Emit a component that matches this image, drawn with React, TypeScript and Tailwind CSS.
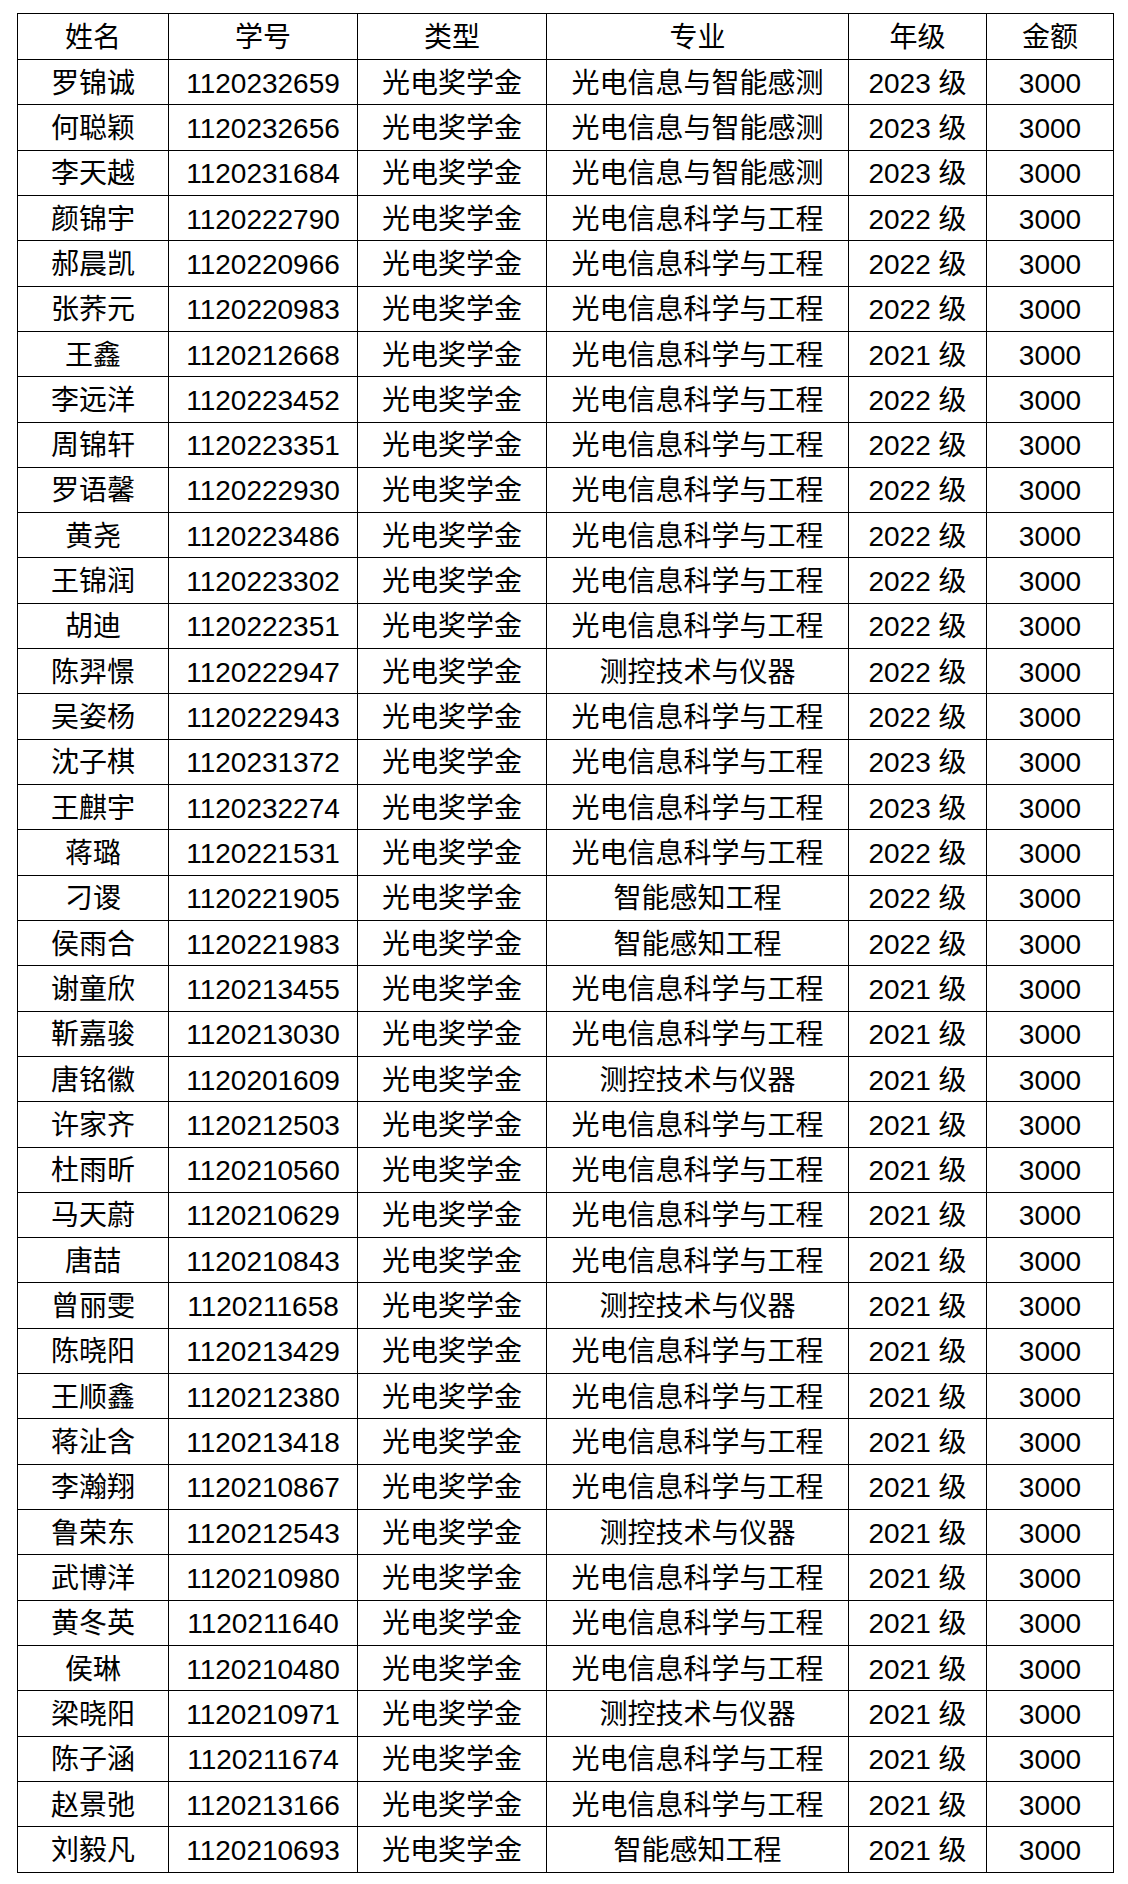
const ROWS: [string, string, string, string, string][] = [
  ['罗锦诚', '1120232659', '光电奖学金', '光电信息与智能感测', '2023'],
  ['何聪颖', '1120232656', '光电奖学金', '光电信息与智能感测', '2023'],
  ['李天越', '1120231684', '光电奖学金', '光电信息与智能感测', '2023'],
  ['颜锦宇', '1120222790', '光电奖学金', '光电信息科学与工程', '2022'],
  ['郝晨凯', '1120220966', '光电奖学金', '光电信息科学与工程', '2022'],
  ['张荞元', '1120220983', '光电奖学金', '光电信息科学与工程', '2022'],
  ['王鑫', '1120212668', '光电奖学金', '光电信息科学与工程', '2021'],
  ['李远洋', '1120223452', '光电奖学金', '光电信息科学与工程', '2022'],
  ['周锦轩', '1120223351', '光电奖学金', '光电信息科学与工程', '2022'],
  ['罗语馨', '1120222930', '光电奖学金', '光电信息科学与工程', '2022'],
  ['黄尧', '1120223486', '光电奖学金', '光电信息科学与工程', '2022'],
  ['王锦润', '1120223302', '光电奖学金', '光电信息科学与工程', '2022'],
  ['胡迪', '1120222351', '光电奖学金', '光电信息科学与工程', '2022'],
  ['陈羿憬', '1120222947', '光电奖学金', '测控技术与仪器', '2022'],
  ['吴姿杨', '1120222943', '光电奖学金', '光电信息科学与工程', '2022'],
  ['沈子棋', '1120231372', '光电奖学金', '光电信息科学与工程', '2023'],
  ['王麒宇', '1120232274', '光电奖学金', '光电信息科学与工程', '2023'],
  ['蒋璐', '1120221531', '光电奖学金', '光电信息科学与工程', '2022'],
  ['刁谡', '1120221905', '光电奖学金', '智能感知工程', '2022'],
  ['侯雨合', '1120221983', '光电奖学金', '智能感知工程', '2022'],
  ['谢童欣', '1120213455', '光电奖学金', '光电信息科学与工程', '2021'],
  ['靳嘉骏', '1120213030', '光电奖学金', '光电信息科学与工程', '2021'],
  ['唐铭徽', '1120201609', '光电奖学金', '测控技术与仪器', '2021'],
  ['许家齐', '1120212503', '光电奖学金', '光电信息科学与工程', '2021'],
  ['杜雨昕', '1120210560', '光电奖学金', '光电信息科学与工程', '2021'],
  ['马天蔚', '1120210629', '光电奖学金', '光电信息科学与工程', '2021'],
  ['唐喆', '1120210843', '光电奖学金', '光电信息科学与工程', '2021'],
  ['曾丽雯', '1120211658', '光电奖学金', '测控技术与仪器', '2021'],
  ['陈晓阳', '1120213429', '光电奖学金', '光电信息科学与工程', '2021'],
  ['王顺鑫', '1120212380', '光电奖学金', '光电信息科学与工程', '2021'],
  ['蒋沚含', '1120213418', '光电奖学金', '光电信息科学与工程', '2021'],
  ['李瀚翔', '1120210867', '光电奖学金', '光电信息科学与工程', '2021'],
  ['鲁荣东', '1120212543', '光电奖学金', '测控技术与仪器', '2021'],
  ['武博洋', '1120210980', '光电奖学金', '光电信息科学与工程', '2021'],
  ['黄冬英', '1120211640', '光电奖学金', '光电信息科学与工程', '2021'],
  ['侯琳', '1120210480', '光电奖学金', '光电信息科学与工程', '2021'],
  ['梁晓阳', '1120210971', '光电奖学金', '测控技术与仪器', '2021'],
  ['陈子涵', '1120211674', '光电奖学金', '光电信息科学与工程', '2021'],
  ['赵景弛', '1120213166', '光电奖学金', '光电信息科学与工程', '2021'],
  ['刘毅凡', '1120210693', '光电奖学金', '智能感知工程', '2021'],
];

const HEAD = ['姓名', '学号', '类型', '专业', '年级', '金额'];
const cell = 'border border-black p-0 pt-[3px] text-center align-middle leading-none';

export default function App() {
  return (
    <div className="bg-white w-[1128px] h-[1884px] pt-[13px] pl-[17px] text-black text-[28px] font-['Liberation_Sans','Noto_Sans_CJK_SC',sans-serif]">
      <table className="table-fixed border-collapse w-[1096px]">
        <colgroup>
          <col className="w-[151px]" />
          <col className="w-[189px]" />
          <col className="w-[189px]" />
          <col className="w-[302px]" />
          <col className="w-[138px]" />
          <col className="w-[127px]" />
        </colgroup>
        <thead>
          <tr className="h-[46px]">
            {HEAD.map(h => <th key={h} className={`${cell} font-normal`}>{h}</th>)}
          </tr>
        </thead>
        <tbody>
          {ROWS.map(r => (
            <tr key={r[1]} className="h-[45.32px]">
              <td className={cell}>{r[0]}</td>
              <td className={cell}>{r[1]}</td>
              <td className={cell}>{r[2]}</td>
              <td className={cell}>{r[3]}</td>
              <td className={cell}>{r[4]} 级</td>
              <td className={cell}>3000</td>
            </tr>
          ))}
        </tbody>
      </table>
    </div>
  );
}
